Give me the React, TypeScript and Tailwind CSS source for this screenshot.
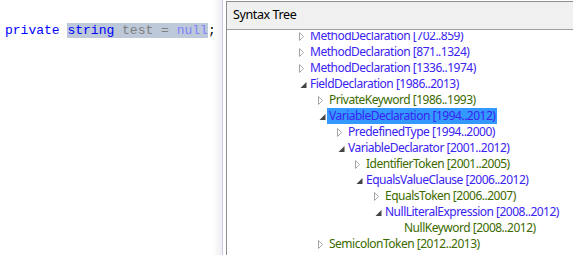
import React from 'react';

type Node = {
  label: string;
  span: string;
  depth: number;
  kind: 'node' | 'token';
  state: 'open' | 'closed' | 'leaf';
  selected?: boolean;
};

const rows: Node[] = [
  { label: 'MethodDeclaration', span: '[702..859)', depth: 0, kind: 'node', state: 'closed' },
  { label: 'MethodDeclaration', span: '[871..1324)', depth: 0, kind: 'node', state: 'closed' },
  { label: 'MethodDeclaration', span: '[1336..1974)', depth: 0, kind: 'node', state: 'closed' },
  { label: 'FieldDeclaration', span: '[1986..2013)', depth: 0, kind: 'node', state: 'open' },
  { label: 'PrivateKeyword', span: '[1986..1993)', depth: 1, kind: 'token', state: 'closed' },
  { label: 'VariableDeclaration', span: '[1994..2012)', depth: 1, kind: 'node', state: 'open', selected: true },
  { label: 'PredefinedType', span: '[1994..2000)', depth: 2, kind: 'node', state: 'closed' },
  { label: 'VariableDeclarator', span: '[2001..2012)', depth: 2, kind: 'node', state: 'open' },
  { label: 'IdentifierToken', span: '[2001..2005)', depth: 3, kind: 'token', state: 'closed' },
  { label: 'EqualsValueClause', span: '[2006..2012)', depth: 3, kind: 'node', state: 'open' },
  { label: 'EqualsToken', span: '[2006..2007)', depth: 4, kind: 'token', state: 'closed' },
  { label: 'NullLiteralExpression', span: '[2008..2012)', depth: 4, kind: 'node', state: 'open' },
  { label: 'NullKeyword', span: '[2008..2012)', depth: 5, kind: 'token', state: 'leaf' },
  { label: 'SemicolonToken', span: '[2012..2013)', depth: 1, kind: 'token', state: 'closed' },
];

const indent = ['ml-[0px]', 'ml-[19px]', 'ml-[38px]', 'ml-[56px]', 'ml-[75px]', 'ml-[94px]'];

function Arrow({ state }: { state: Node['state'] }) {
  if (state === 'closed') {
    return (
      <svg width="11" height="16" viewBox="0 0 11 16" className="shrink-0">
        <path d="M0.5 4.5 L0.5 12.5 L4.5 8.5 Z" fill="none" stroke="#a6a6a6" strokeWidth="1" />
      </svg>
    );
  }
  if (state === 'open') {
    return (
      <svg width="11" height="16" viewBox="0 0 11 16" className="shrink-0">
        <path d="M7.5 6 L7.5 12 L1.5 12 Z" fill="#444444" />
      </svg>
    );
  }
  return <span className="w-[11px] shrink-0" />;
}

function TreeRow({ row }: { row: Node }) {
  const color = row.kind === 'node' ? 'text-[#3a22f2]' : 'text-[#3c6a00]';
  return (
    <div className={`flex h-4 items-center ${indent[row.depth]}`}>
      <Arrow state={row.state} />
      <span
        className={`-ml-[2px] flex h-4 items-center whitespace-nowrap px-[2px] leading-4 ${color} ${
          row.selected ? 'bg-[#3399ff]' : ''
        }`}
      >
        {row.label} {row.span}
      </span>
    </div>
  );
}

export default function App() {
  return (
    <div className="flex h-[255px] w-[573px] overflow-hidden bg-white">
      <div className="relative w-[222px] shrink-0">
        <div className="pt-[21px] pl-[5px] font-['Liberation_Mono',monospace] text-[13px] leading-[19px] whitespace-pre">
          <span className="text-[#0000ff]">private </span>
          <span className="bg-[#bdc9d8]">
            <span className="text-[#0000ff]">string</span>
            <span className="text-[#808080]"> test = </span>
            <span className="text-[#8080ff]">null</span>
          </span>
          <span className="text-black">;</span>
        </div>
        <div className="absolute inset-y-0 right-0 w-[9px] bg-gradient-to-r from-white to-[#eeeef2]" />
      </div>
      <div className="w-px shrink-0 bg-[#c9c9ec]" />
      <div className="w-[3px] shrink-0 bg-white" />
      <div className="mt-px flex flex-1 flex-col border-t border-l border-[#8e8e8e]">
        <div className="flex h-[28px] shrink-0 items-center border-b border-[#a0a0a0] bg-[#f0f0f0] pl-[6px] font-['Noto_Sans',sans-serif] text-[12.5px] tracking-[-0.4px] text-black">
          Syntax Tree
        </div>
        <div className="mt-[2px] flex-1 overflow-hidden">
          <div className="-mt-[4px] pl-[72px] font-['Noto_Sans',sans-serif] text-[12px] tracking-[-0.5px]">
            {rows.map((r, i) => (
              <TreeRow key={i} row={r} />
            ))}
          </div>
        </div>
      </div>
    </div>
  );
}
